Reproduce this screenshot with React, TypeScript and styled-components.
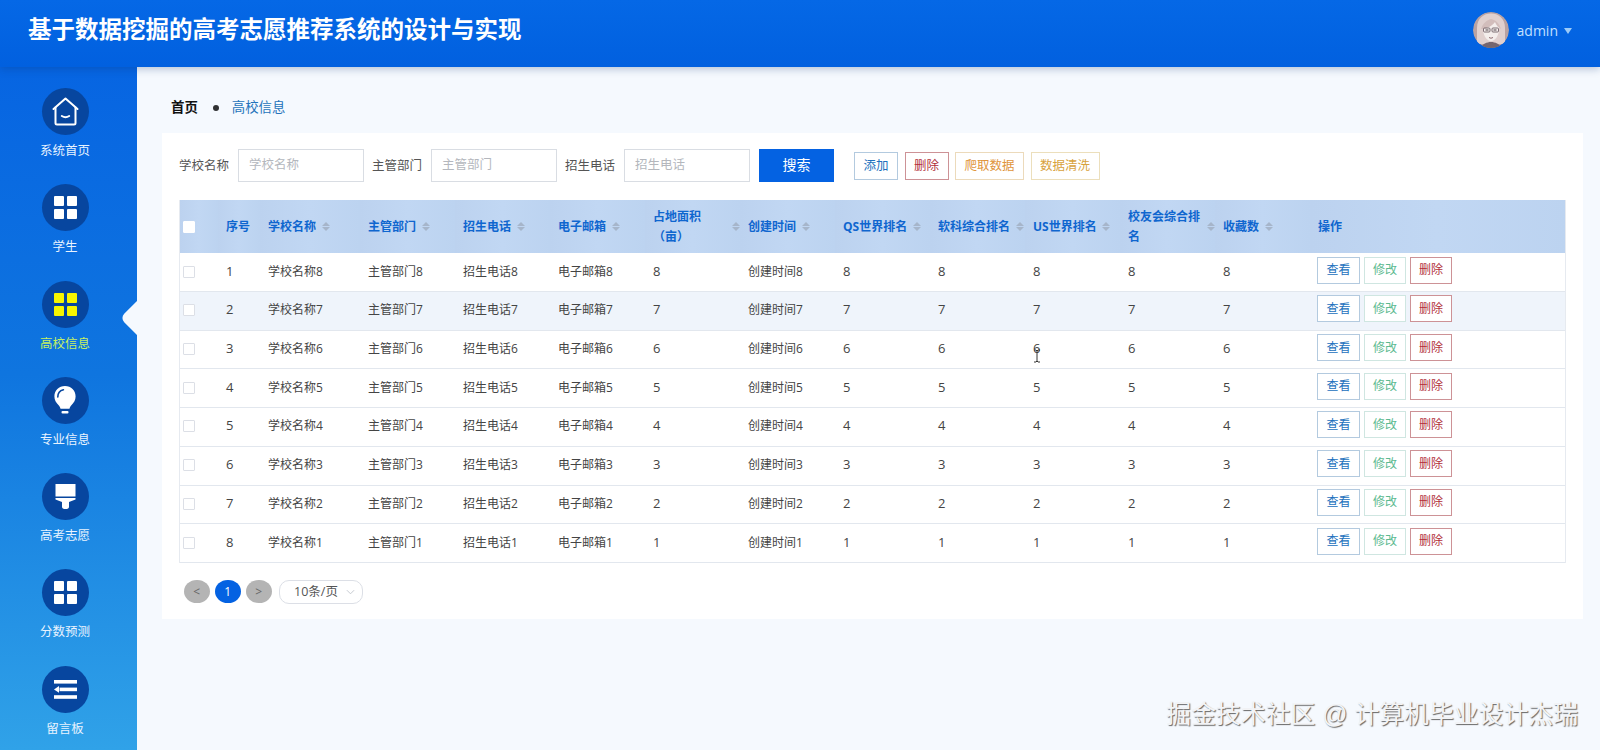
import React from 'react';
import styled, { createGlobalStyle } from 'styled-components';

const FONT = '"Open Sans", "Noto Sans CJK SC", sans-serif';

const GlobalStyle = createGlobalStyle`
  html, body {
    margin: 0;
    padding: 0;
    background: #f5f9fe;
    font-family: ${FONT};
  }
  * {
    box-sizing: border-box;
  }
`;

type Tone = 'blue' | 'green' | 'red' | 'orange' | 'gold';

const TONES: Record<Tone, { text: string; border: string }> = {
  blue: { text: '#2170bd', border: '#b3cadf' },
  green: { text: '#5cba90', border: '#cfe6e1' },
  red: { text: '#b2303a', border: '#cd9296' },
  orange: { text: '#e0953c', border: '#ecdabb' },
  gold: { text: '#d8a23c', border: '#ecdfbc' }
};

const HomeIcon = () => (
  <svg width="27" height="29" viewBox="0 0 27 29" fill="none" stroke="#fff" strokeWidth="2" strokeLinecap="round" strokeLinejoin="round">
    <path d="M1.500 12 13.500 1.500 25.500 12" />
    <path d="M3.500 10.500V26a1.500 1.500 0 0 0 1.500 1.500h17a1.500 1.500 0 0 0 1.500-1.500V10.500" />
    <path d="M9.800 19q3.700 2.300 7.400 0" />
  </svg>
);

const GridIcon = ({ color = '#fff' }: { color?: string }) => (
  <svg width="23" height="23" viewBox="0 0 23 23" fill={color}>
    <rect x="0" y="0" width="10" height="10" rx="1" />
    <rect x="13" y="0" width="10" height="10" rx="1" />
    <rect x="0" y="13" width="10" height="10" rx="1" />
    <rect x="13" y="13" width="10" height="10" rx="1" />
  </svg>
);

const BulbIcon = () => (
  <svg width="22" height="28" viewBox="0 0 22 28">
    <path fill="#fff" d="M11 0C4.900 0 .4 4.600.4 10.400c0 3.600 1.700 6.200 3.800 8.300 1.300 1.300 2 2.500 2.300 4h9c.3-1.500 1-2.700 2.300-4 2.100-2.100 3.800-4.700 3.800-8.300C21.600 4.600 17.100 0 11 0z" />
    <path fill="none" stroke="#07469f" strokeWidth="1.600" strokeLinecap="round" d="M3.800 11c0-3.700 2.300-6.400 5.600-7.200" />
    <rect x="7.500" y="25" width="7" height="2.400" rx="1" fill="#fff" />
  </svg>
);

const BrushIcon = () => (
  <svg width="21" height="25" viewBox="0 0 21 25" fill="#fff">
    <rect x="0.500" y="0" width="20" height="12.500" />
    <path d="M0.500 14h20v1.500l-6.500 2.500v5.200a2.500 2.500 0 0 1-2.500 1.800h-2a2.500 2.500 0 0 1-2.500-1.800V18L.5 15.500z" />
  </svg>
);

const OutdentIcon = () => (
  <svg width="23" height="19" viewBox="0 0 23 19" fill="#fff">
    <rect x="0" y="0" width="23" height="3.600" />
    <rect x="5.500" y="7.600" width="17.500" height="3.600" />
    <rect x="0" y="15.200" width="23" height="3.600" />
    <path d="M0 9.400 5 6v6.800z" />
  </svg>
);

const NAV_ITEMS = [
  { label: '系统首页', icon: <HomeIcon /> },
  { label: '学生', icon: <GridIcon /> },
  { label: '高校信息', icon: <GridIcon color="#f7f500" />, active: true },
  { label: '专业信息', icon: <BulbIcon /> },
  { label: '高考志愿', icon: <BrushIcon /> },
  { label: '分数预测', icon: <GridIcon /> },
  { label: '留言板', icon: <OutdentIcon /> }
];

const COLUMNS = [
  { title: '学校名称', key: 'name', width: 100 },
  { title: '主管部门', key: 'dept', width: 95 },
  { title: '招生电话', key: 'phone', width: 95 },
  { title: '电子邮箱', key: 'mail', width: 95 },
  { title: '占地面积（亩）', key: 'area', width: 95, stretch: true, numeric: true },
  { title: '创建时间', key: 'created', width: 95 },
  { title: 'QS世界排名', key: 'qs', width: 95, numeric: true },
  { title: '软科综合排名', key: 'rk', width: 95, numeric: true },
  { title: 'US世界排名', key: 'us', width: 95, numeric: true },
  { title: '校友会综合排名', key: 'alumni', width: 95, stretch: true, numeric: true },
  { title: '收藏数', key: 'fav', width: 95, numeric: true }
];

const ROWS = Array.from({ length: 8 }, (_, i) => {
  const n = 8 - i;
  return {
    id: i + 1,
    name: `学校名称${n}`,
    dept: `主管部门${n}`,
    phone: `招生电话${n}`,
    mail: `电子邮箱${n}`,
    area: `${n}`,
    created: `创建时间${n}`,
    qs: `${n}`,
    rk: `${n}`,
    us: `${n}`,
    alumni: `${n}`,
    fav: `${n}`
  } as Record<string, string | number>;
});

const FILTERS = ['学校名称', '主管部门', '招生电话'];

const App: React.FC = () => {
  return (
    <Page>
      <GlobalStyle />
      <Header>
        <Title>基于数据挖掘的高考志愿推荐系统的设计与实现</Title>
        <UserBox>
          <Avatar viewBox="0 0 36 36">
            <circle cx="18" cy="18" r="18" fill="#b9a2a2" />
            <path d="M4 32V16C4 6 11 1.500 18 1.500S32 6 32 16v16z" fill="#e0d0ce" />
            <path d="M10 17c0-5 3-8 8-8s8 3 8 8-3 12-8 12-8-7-8-12z" fill="#f4eeec" />
            <path d="M8 17c2-6 6-9 10-10 5 1 8 4 10 10-3-2-5-4-6-7-3 4-8 7-14 7z" fill="#d2bdbb" />
            <rect x="10.500" y="16" width="6.500" height="4" rx="1" fill="none" stroke="#6f6068" strokeWidth="0.900" />
            <rect x="19" y="16" width="6.500" height="4" rx="1" fill="none" stroke="#6f6068" strokeWidth="0.900" />
            <path d="M12.500 18h3M20.500 18h3" stroke="#4e4249" strokeWidth="1.200" />
            <path d="M16 25.500q2 1.500 4 0" stroke="#8d6d70" strokeWidth="1" fill="none" />
            <path d="M8 36c1-4 6-6 10-6s9 2 10 6z" fill="#75666f" />
          </Avatar>
          <UserName>admin</UserName>
          <UserCaret />
        </UserBox>
      </Header>
      <Body>
        <Sidebar>
          {NAV_ITEMS.map(item => (
            <NavItem key={item.label} $active={item.active}>
              <NavCircle>{item.icon}</NavCircle>
              <NavLabel $active={item.active}>{item.label}</NavLabel>
            </NavItem>
          ))}
        </Sidebar>
        <Main>
          <Breadcrumb>
            <Crumb>首页</Crumb>
            <CrumbDot />
            <CrumbLink>高校信息</CrumbLink>
          </Breadcrumb>
          <Card>
            <FilterBar>
              {FILTERS.map(name => (
                <FilterField key={name}>
                  <FilterLabel>{name}</FilterLabel>
                  <FilterInput placeholder={name} readOnly />
                </FilterField>
              ))}
              <SearchButton>搜索</SearchButton>
              <ToolGroup>
                <ToolButton $tone="blue" $width={44}>添加</ToolButton>
                <ToolButton $tone="red" $width={44}>删除</ToolButton>
                <ToolButton $tone="orange" $width={69}>爬取数据</ToolButton>
                <ToolButton $tone="gold" $width={69}>数据清洗</ToolButton>
              </ToolGroup>
            </FilterBar>
            <Table>
              <colgroup>
                <Col $width={38} />
                <Col $width={42} />
                {COLUMNS.map(col => (
                  <Col key={col.key} $width={col.width} />
                ))}
                <Col $width={255} />
              </colgroup>
              <thead>
                <tr>
                  <HeadCell $narrow>
                    <CheckBox $head />
                  </HeadCell>
                  <HeadCell>序号</HeadCell>
                  {COLUMNS.map(col => (
                    <HeadCell key={col.key}>
                      <HeadInner>
                        <HeadLabel $stretch={col.stretch}>{col.title}</HeadLabel>
                        <SortCaret>
                          <SortUp />
                          <SortDown />
                        </SortCaret>
                      </HeadInner>
                    </HeadCell>
                  ))}
                  <HeadCell>操作</HeadCell>
                </tr>
              </thead>
              <tbody>
                {ROWS.map(row => (
                  <tr key={row.id}>
                    <Cell $narrow $hover={row.id === 2}>
                      <CheckBox />
                    </Cell>
                    <Cell $numeric $hover={row.id === 2}>{row.id}</Cell>
                    {COLUMNS.map(col => (
                      <Cell key={col.key} $numeric={col.numeric} $hover={row.id === 2}>
                        {row[col.key]}
                      </Cell>
                    ))}
                    <Cell $hover={row.id === 2}>
                      <Actions>
                        <ActionButton $tone="blue" $width={43}>查看</ActionButton>
                        <ActionButton $tone="green" $width={42}>修改</ActionButton>
                        <ActionButton $tone="red" $width={42}>删除</ActionButton>
                      </Actions>
                    </Cell>
                  </tr>
                ))}
              </tbody>
            </Table>
            <Pager>
              <PageButton $current={false}>&lt;</PageButton>
              <PageButton $current>1</PageButton>
              <PageButton $current={false}>&gt;</PageButton>
              <PageSize>
                10条/页
                <PageSizeCaret viewBox="0 0 10 6">
                  <path d="M1 1l4 4 4-4" fill="none" stroke="#c0c4cc" strokeWidth="1" />
                </PageSizeCaret>
              </PageSize>
            </Pager>
          </Card>
        </Main>
      </Body>
      <TextCursor viewBox="0 0 8 14">
        <path d="M1 1h2l1 1 1-1h2M4 2v10M1 13h2l1-1 1 1h2" fill="none" stroke="#333" strokeWidth="1" />
      </TextCursor>
      <Watermark>掘金技术社区 @ 计算机毕业设计杰瑞</Watermark>
    </Page>
  );
};

const Page = styled.div`
  position: relative;
  display: flex;
  flex-direction: column;
  width: 1600px;
  height: 750px;
  overflow: hidden;
  background: #f5f9fe;
`;

const Header = styled.header`
  position: relative;
  z-index: 2;
  flex: none;
  display: flex;
  align-items: center;
  justify-content: space-between;
  height: 67px;
  padding: 0 28px 9px 28px;
  background: linear-gradient(180deg, #0568e6 0%, #0160df 100%);
  box-shadow: 0 2px 8px rgba(10, 50, 110, 0.28);
`;

const Title = styled.h1`
  margin: 0;
  color: #fff;
  font-size: 23.500px;
  font-weight: 700;
  line-height: 32px;
  white-space: nowrap;
`;

const UserBox = styled.div`
  display: flex;
  align-items: center;
  padding-top: 2px;
`;

const Avatar = styled.svg`
  width: 36px;
  height: 36px;
  margin-right: 7.500px;
  border-radius: 50%;
`;

const UserName = styled.span`
  color: #c4e0ff;
  font-size: 14px;
`;

const UserCaret = styled.span`
  width: 0;
  height: 0;
  margin: 2px 0 0 6px;
  border-left: 4px solid transparent;
  border-right: 4px solid transparent;
  border-top: 6px solid #9ccbf8;
`;

const Body = styled.div`
  flex: 1;
  display: flex;
  min-height: 0;
`;

const Sidebar = styled.nav`
  flex: none;
  display: flex;
  flex-direction: column;
  align-items: center;
  gap: 23.300px;
  width: 137px;
  padding: 21px 7px 0 0;
  overflow: hidden;
  background: linear-gradient(180deg, #0765e2 0%, #0f75df 45%, #30a2e8 100%);
`;

const NavItem = styled.a<{ $active?: boolean }>`
  position: relative;
  flex: none;
  display: flex;
  flex-direction: column;
  align-items: center;
  width: 100%;
  height: 73px;
  cursor: pointer;

  ${props =>
    props.$active &&
    `
    &::after {
      content: '';
      position: absolute;
      top: 20px;
      right: -31px;
      width: 34px;
      height: 34px;
      border-radius: 6px;
      background: #f5f9fe;
      transform: rotate(45deg);
    }
  `}
`;

const NavCircle = styled.div`
  flex: none;
  display: flex;
  align-items: center;
  justify-content: center;
  width: 47px;
  height: 47px;
  border-radius: 50%;
  background: #07469f;
`;

const NavLabel = styled.span<{ $active?: boolean }>`
  flex: none;
  margin-top: 6px;
  color: ${props => (props.$active ? '#c6f15f' : '#e8f3ff')};
  font-size: 12.500px;
  line-height: 20px;
`;

const Main = styled.main`
  flex: 1;
  min-width: 0;
  padding: 0 17px 0 25px;
`;

const Breadcrumb = styled.div`
  display: flex;
  align-items: center;
  height: 66px;
  padding: 12px 0 0 9px;
  font-size: 13.400px;
`;

const Crumb = styled.span`
  color: #111;
  font-weight: 700;
`;

const CrumbDot = styled.span`
  width: 6px;
  height: 6px;
  margin: 3px 13px 0 15px;
  border-radius: 50%;
  background: #303133;
`;

const CrumbLink = styled.span`
  color: #2473bb;
`;

const Card = styled.section`
  height: 486px;
  padding: 16px 18px 0;
  background: #fff;
`;

const FilterBar = styled.div`
  display: flex;
  align-items: center;
  height: 33px;
  margin: 0 0 18px -1px;
`;

const FilterField = styled.label`
  display: flex;
  align-items: center;
  margin-right: 8px;
`;

const FilterLabel = styled.span`
  margin-right: 9px;
  padding-bottom: 2px;
  color: #555;
  font-size: 12.500px;
  white-space: nowrap;
`;

const FilterInput = styled.input`
  width: 126px;
  height: 33px;
  padding: 0 10px 2px;
  border: 1px solid #d9dde3;
  outline: none;
  background: #fff;
  color: #555;
  font-family: ${FONT};
  font-size: 12.500px;

  &::placeholder {
    color: #b4b7bd;
  }
`;

const SearchButton = styled.button`
  width: 75px;
  height: 33px;
  margin-left: 1px;
  padding: 0 0 3px;
  border: 0;
  background: #0462e2;
  color: #fff;
  font-family: ${FONT};
  font-size: 14px;
`;

const ToolGroup = styled.div`
  display: flex;
  gap: 6.500px;
  margin-left: 20px;
`;

const ToolButton = styled.button<{ $tone: Tone; $width: number }>`
  width: ${props => props.$width}px;
  height: 28px;
  padding: 0 0 2px;
  border: 1px solid ${props => TONES[props.$tone].border};
  background: #fff;
  color: ${props => TONES[props.$tone].text};
  font-family: ${FONT};
  font-size: 12.500px;
`;

const Table = styled.table`
  width: 1385px;
  margin-left: -1px;
  border-collapse: separate;
  border-spacing: 0;
  table-layout: fixed;
  border-left: 1px solid #e6eaf0;
  border-right: 1px solid #e6eaf0;
`;

const Col = styled.col<{ $width: number }>`
  width: ${props => props.$width}px;
`;

const HeadCell = styled.th<{ $narrow?: boolean }>`
  height: 53.400px;
  padding: 0 0 0 ${props => (props.$narrow ? 3 : 8)}px;
  background: linear-gradient(90deg, #bcd2ef 0%, #c1d7f3 50%, #bcd3f0 100%);
  color: #0f66cf;
  font-size: 12px;
  font-weight: 700;
  line-height: 20px;
  text-align: left;
`;

const HeadInner = styled.div`
  display: flex;
  align-items: center;
  gap: 5.500px;
`;

const HeadLabel = styled.span<{ $stretch?: boolean }>`
  flex: ${props => (props.$stretch ? 1 : '0 1 auto')};
  min-width: 0;
`;

const SortCaret = styled.span`
  flex: none;
  display: inline-flex;
  flex-direction: column;
  gap: 1px;
  width: 8px;
`;

const SortUp = styled.i`
  width: 0;
  height: 0;
  border-left: 4px solid transparent;
  border-right: 4px solid transparent;
  border-bottom: 4.500px solid #a6b5ca;
`;

const SortDown = styled.i`
  width: 0;
  height: 0;
  border-left: 4px solid transparent;
  border-right: 4px solid transparent;
  border-top: 4.500px solid #a6b5ca;
`;

const Cell = styled.td<{ $narrow?: boolean; $numeric?: boolean; $hover?: boolean }>`
  height: 38.700px;
  padding: 0 0 ${props => (props.$numeric ? 3 : 1)}px ${props => (props.$narrow ? 3 : 8)}px;
  border-bottom: 1px solid #e2e7ee;
  background: ${props => (props.$hover ? '#eff4fb' : '#fff')};
  color: #444;
  font-size: ${props => (props.$numeric ? 13 : 12)}px;
  line-height: 20px;
`;

const CheckBox = styled.span<{ $head?: boolean }>`
  display: block;
  width: 12px;
  height: 12px;
  border: 1px solid ${props => (props.$head ? '#fff' : '#dcdfe6')};
  border-radius: 1px;
  background: #fff;
`;

const Actions = styled.div`
  display: flex;
  gap: 4px;
  margin: -3px 0 0 -1px;
`;

const ActionButton = styled.button<{ $tone: Tone; $width: number }>`
  width: ${props => props.$width}px;
  height: 27px;
  padding: 0 0 2px;
  border: 1px solid ${props => TONES[props.$tone].border};
  background: #fff;
  color: ${props => TONES[props.$tone].text};
  font-family: ${FONT};
  font-size: 12px;
`;

const Pager = styled.div`
  display: flex;
  align-items: center;
  gap: 5.500px;
  margin: 17px 0 0 4px;
`;

const PageButton = styled.button<{ $current: boolean }>`
  width: 25.500px;
  height: 23px;
  padding: 0;
  border: 0;
  border-radius: 50%;
  background: ${props => (props.$current ? '#0462e2' : '#b4b4b4')};
  color: ${props => (props.$current ? '#fff' : '#666')};
  font-family: ${FONT};
  font-size: 12px;
`;

const PageSize = styled.div`
  position: relative;
  width: 84px;
  height: 24px;
  margin-left: 2px;
  padding-left: 14px;
  border: 1px solid #dcdfe6;
  border-radius: 10px;
  background: #fff;
  color: #555;
  font-size: 12.500px;
  line-height: 22px;
`;

const PageSizeCaret = styled.svg`
  position: absolute;
  top: 8px;
  right: 7px;
  width: 9px;
  height: 6px;
`;

const TextCursor = styled.svg`
  position: absolute;
  left: 1033px;
  top: 349px;
  width: 8px;
  height: 14px;
`;

const Watermark = styled.div`
  position: absolute;
  right: 22px;
  top: 698px;
  color: #f3f4f6;
  font-family: "Liberation Sans", "Noto Sans CJK SC", sans-serif;
  font-size: 24.850px;
  line-height: 34px;
  white-space: nowrap;
  text-shadow: 1px 1px 1px #666;
`;

export default App;
